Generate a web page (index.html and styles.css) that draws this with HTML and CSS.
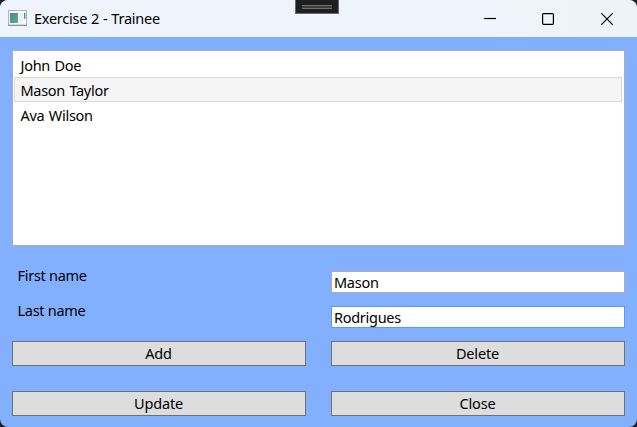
FILE: index.html
```html
<!DOCTYPE html>
<html lang="en">
<head>
<meta charset="utf-8">
<title>Exercise 2 - Trainee</title>
<link rel="stylesheet" href="styles.css">
</head>
<body>
<div class="window">
  <header class="titlebar">
    <svg class="app-icon" width="19" height="16" viewBox="0 0 19 16">
      <defs>
        <linearGradient id="pane" x1="0" y1="0" x2="1" y2="1"><stop offset="0" stop-color="#4a7fb5"/><stop offset="1" stop-color="#58b274"/></linearGradient>
      </defs>
      <rect x=".5" y=".5" width="18" height="14.5" fill="#f8f9fa" stroke="#aeb4b9"/>
      <path d="M0 15.5H19" stroke="#8d9499"/>
      <rect x="2" y="3" width="8" height="10" fill="url(#pane)"/>
      <rect x="11" y="3" width="4" height="10" fill="#f0f0f0"/>
      <rect x="16" y="3" width="1.5" height="6" fill="url(#pane)"/>
    </svg>
    <h1 class="title">Exercise 2 - Trainee</h1>
    <div class="controls">
      <svg class="control" width="12" height="12" viewBox="0 0 12 12"><path d="M0 5.5H12"/></svg>
      <svg class="control" width="12" height="12" viewBox="0 0 12 12"><rect x=".6" y=".6" width="10.8" height="10.8" rx="1"/></svg>
      <svg class="control" width="12" height="12" viewBox="0 0 12 12"><path d="M.3 .3L11.7 11.7M11.7 .3L.3 11.7"/></svg>
    </div>
    <div class="debug-tab"><span class="grip"></span></div>
  </header>
  <main class="content">
    <ul class="list">
      <li class="item">John Doe</li>
      <li class="item selected">Mason Taylor</li>
      <li class="item">Ava Wilson</li>
    </ul>
    <form class="form">
      <label class="label" for="first">First name</label>
      <input class="field" id="first" value="Mason">
      <label class="label" for="last">Last name</label>
      <input class="field focused" id="last" value="Rodrigues">
    </form>
    <div class="buttons">
      <button class="button">Add</button>
      <button class="button">Delete</button>
      <button class="button">Update</button>
      <button class="button">Close</button>
    </div>
  </main>
</div>
</body>
</html>
```
FILE: styles.css
```css
* { box-sizing: border-box; }
body { margin: 0; background: #1e1c1c; overflow: hidden; }
.window {
  width: 637px; height: 427px; overflow: hidden; border-radius: 8px;
  background: #83afff; color: #000;
  font: 14.5px/20px "Noto Sans", "Segoe UI", sans-serif; letter-spacing: -0.28px;
}
.titlebar {
  position: relative; display: flex; align-items: center; height: 37px; padding: 0 24px 0 8px;
  background: linear-gradient(90deg, #eff3fb 0 75%, #eef3f8);
}
.app-icon { margin-top: -2px; }
.title { margin: -2px 0 0 7px; font-size: inherit; font-weight: 400; letter-spacing: -0.25px; word-spacing: 0.4px; }
.controls { display: grid; grid-template-columns: 58px 59px 12px; margin-left: auto; }
.control { fill: none; stroke: #000; stroke-width: 1.2; }
.debug-tab {
  position: absolute; left: 295px; top: 0; width: 44px; height: 14px;
  border: 1px solid #686868; border-top: 0; background: #1f1f1f; padding: 5px 6px;
}
.grip { display: block; height: 4px; background: #3d3d3d; border: solid #707070; border-width: 1px 0; }
.content { padding: 13px 12px 0; }
.list {
  height: 196px; margin: 0; padding: 1px 2px 0 1px; list-style: none;
  background: #fff; border: 1px solid #abadb3; letter-spacing: -0.3px; word-spacing: 1px;
}
.item { height: 25px; padding: 2px 5px 2px 5.5px; border: 1px solid transparent; }
.selected { background: #f5f5f5; border-color: #dadada; }
.form { display: grid; grid-template-columns: 319px 294px; row-gap: 13px; margin-top: 25px; }
.label { height: 22px; padding-left: 5.5px; line-height: 8px; }
.field {
  width: 294px; height: 22px; padding: 0 2px; background: #fff; border: 1px solid #abadb3;
  border-radius: 0; outline: 0; font: inherit; letter-spacing: inherit; color: #000;
}
.focused { border-color: #569de5; }
.buttons { display: grid; grid-template-columns: 294px 294px; gap: 25px; margin-top: 13px; }
.button {
  height: 25px; padding: 0 1px 2px 0; border: 1px solid #707070; border-radius: 0;
  background: #ddd; color: #000; font: inherit; letter-spacing: -0.15px;
}
```
